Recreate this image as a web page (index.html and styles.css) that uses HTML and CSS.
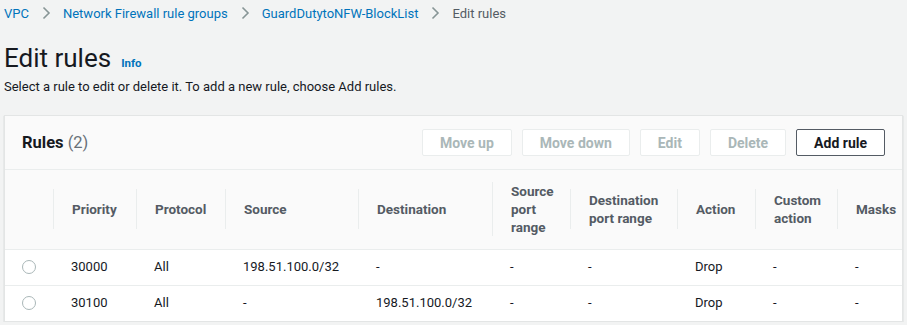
FILE: index.html
```html
<!DOCTYPE html>
<html lang="en">
<head>
  <meta charset="UTF-8">
  <title>Edit rules</title>
  <link rel="stylesheet" href="styles.css">
</head>
<body>
  <nav class="breadcrumbs">
    <a href="#">VPC</a>
    <span class="crumb-sep"><svg width="9" height="14" viewBox="0 0 9 14"><path d="M1.5 1.5 L7 7 L1.5 12.5" fill="none" stroke="#879596" stroke-width="1.6"/></svg></span>
    <a href="#">Network Firewall rule groups</a>
    <span class="crumb-sep"><svg width="9" height="14" viewBox="0 0 9 14"><path d="M1.5 1.5 L7 7 L1.5 12.5" fill="none" stroke="#879596" stroke-width="1.6"/></svg></span>
    <a href="#">GuardDutytoNFW-BlockList</a>
    <span class="crumb-sep"><svg width="9" height="14" viewBox="0 0 9 14"><path d="M1.5 1.5 L7 7 L1.5 12.5" fill="none" stroke="#879596" stroke-width="1.6"/></svg></span>
    <span class="crumb-current">Edit rules</span>
  </nav>

  <div class="page-head">
    <h1>Edit rules</h1>
    <a href="#" class="info">Info</a>
  </div>
  <p class="description">Select a rule to edit or delete it. To add a new rule, choose Add rules.</p>

  <section class="card">
    <div class="card-header">
      <h2>Rules <span class="count">(2)</span></h2>
      <div class="actions">
        <button class="btn" disabled>Move up</button>
        <button class="btn" disabled>Move down</button>
        <button class="btn" disabled>Edit</button>
        <button class="btn" disabled>Delete</button>
        <button class="btn primary">Add rule</button>
      </div>
    </div>
    <table class="rules">
      <colgroup>
        <col style="width:48px">
        <col style="width:83px">
        <col style="width:89px">
        <col style="width:133px">
        <col style="width:134px">
        <col style="width:78px">
        <col style="width:107px">
        <col style="width:78px">
        <col style="width:82px">
        <col>
      </colgroup>
      <thead>
        <tr>
          <th></th>
          <th><span>Priority</span></th>
          <th><span>Protocol</span></th>
          <th><span>Source</span></th>
          <th><span>Destination</span></th>
          <th><span>Source port range</span></th>
          <th><span>Destination port range</span></th>
          <th><span>Action</span></th>
          <th><span>Custom action</span></th>
          <th><span>Masks</span></th>
        </tr>
      </thead>
      <tbody>
        <tr>
          <td class="select"><span class="radio"></span></td>
          <td>30000</td>
          <td>All</td>
          <td>198.51.100.0/32</td>
          <td>-</td>
          <td>-</td>
          <td>-</td>
          <td>Drop</td>
          <td>-</td>
          <td>-</td>
        </tr>
        <tr>
          <td class="select"><span class="radio"></span></td>
          <td>30100</td>
          <td>All</td>
          <td>-</td>
          <td>198.51.100.0/32</td>
          <td>-</td>
          <td>-</td>
          <td>Drop</td>
          <td>-</td>
          <td>-</td>
        </tr>
      </tbody>
    </table>
  </section>
</body>
</html>
```

FILE: styles.css
```css
* {
  margin: 0;
  padding: 0;
  box-sizing: border-box;
}

body {
  font-family: Roboto, Arial, sans-serif;
  font-size: 13px;
  background-color: #f2f3f3;
  color: #16191f;
  padding: 0 4px;
}

a {
  color: #0073bb;
  text-decoration: none;
}

/* Breadcrumbs */
.breadcrumbs {
  display: flex;
  align-items: center;
  height: 26px;
}

.crumb-sep {
  display: flex;
  align-items: center;
  margin: 0 12px 0 13px;
}

.crumb-current {
  color: #545b64;
}

/* Page header */
.page-head {
  display: flex;
  align-items: baseline;
  gap: 10px;
  margin-top: 14px;
}

.page-head h1 {
  font-size: 26px;
  font-weight: 400;
  line-height: 36px;
}

.page-head .info {
  font-size: 11.5px;
  font-weight: 700;
}

.description {
  line-height: 20px;
  margin-top: 1px;
}

/* Card */
.card {
  margin-top: 18px;
  width: 899px;
  background-color: #fff;
  border: 1px solid #e3e5e5;
  box-shadow: 0 1px 1px rgba(0, 28, 36, 0.25);
}

.card-header {
  display: flex;
  justify-content: space-between;
  align-items: center;
  height: 54px;
  padding: 0 17px;
  background-color: #fafafa;
  border-bottom: 1px solid #eaeded;
}

.card-header h2 {
  font-size: 16.5px;
  font-weight: 700;
}

.card-header .count {
  font-weight: 400;
  color: #687078;
}

.actions {
  display: flex;
  gap: 10px;
}

.btn {
  font-family: inherit;
  font-size: 14px;
  font-weight: 700;
  height: 27px;
  padding: 0 17px;
  background-color: #fff;
  border: 1px solid #545b64;
  border-radius: 2px;
  color: #545b64;
}

.btn[disabled] {
  border-color: #eaeded;
  color: #aab7b8;
}

.btn.primary {
  color: #16191f;
}

/* Table */
.rules {
  width: 100%;
  border-collapse: collapse;
  table-layout: fixed;
}

.rules th {
  height: 79px;
  background-color: #fafafa;
  color: #545b64;
  font-size: 13.5px;
  font-weight: 700;
  text-align: left;
  vertical-align: middle;
  padding: 0;
  border-bottom: 1px solid #eaeded;
}

.rules th span {
  display: flex;
  align-items: center;
  min-height: 40px;
  padding: 0 14px 0 18px;
  border-left: 1px solid #eaeded;
  line-height: 18px;
}

.rules td {
  height: 36px;
  padding: 0 0 1px 18px;
  border-bottom: 1px solid #eaeded;
  vertical-align: middle;
}

.rules tbody tr:last-child td {
  border-bottom: none;
}

.rules td.select {
  padding-left: 17px;
}

.radio {
  display: block;
  width: 14px;
  height: 14px;
  border: 1px solid #aab7b8;
  border-radius: 50%;
  background-color: #fff;
}
```
